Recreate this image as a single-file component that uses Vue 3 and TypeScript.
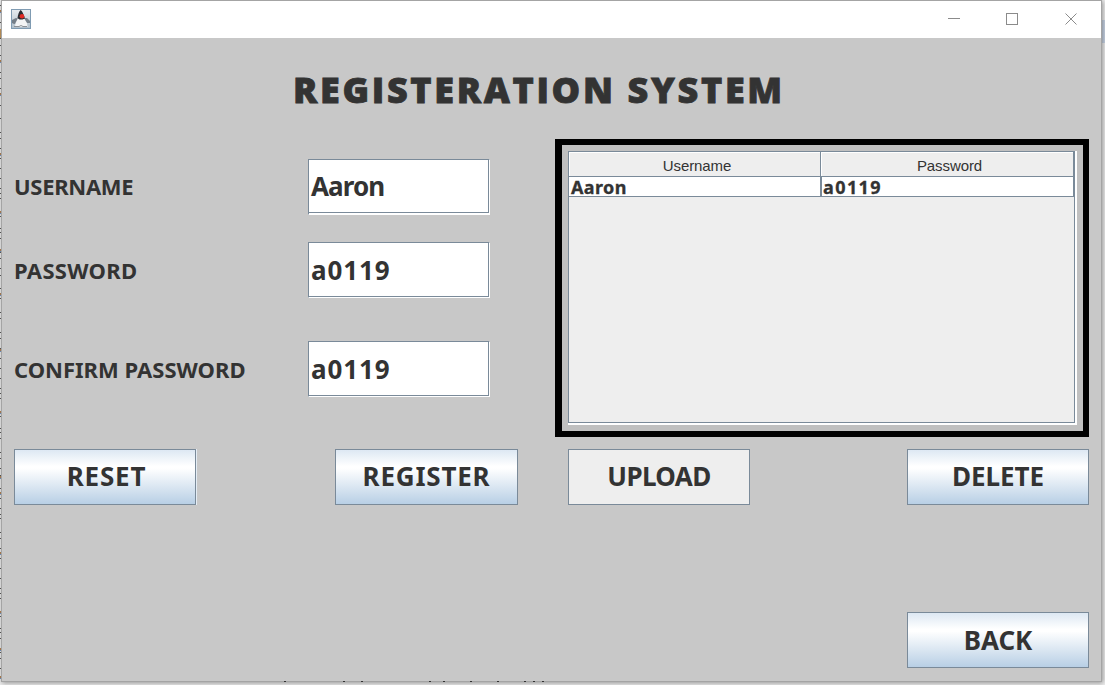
<script setup lang="ts">
interface Field { label: string; value: string; kind: string }

const fields: Field[] = [
  { label: 'USERNAME', value: 'Aaron', kind: 'user' },
  { label: 'PASSWORD', value: 'a0119', kind: 'pass' },
  { label: 'CONFIRM PASSWORD', value: 'a0119', kind: 'confirm' },
]
const columns: string[] = ['Username', 'Password']
const rows: string[][] = [['Aaron', 'a0119']]

// Edges of the editor's line numbers that show beside the window
const ticks: number[] = [
  5, 12, 22, 38, 45, 55, 72, 78, 88, 95, 105, 118, 132, 138, 148, 158, 168, 178, 188, 193, 198, 216, 228, 232, 238,
  252, 258, 268, 275, 288, 293, 298, 312, 318, 332, 338, 348, 358, 368, 378, 388, 393, 398, 416, 428, 432, 438, 452,
  458, 468, 475, 488, 493, 498, 508, 514, 518, 532, 538, 548, 558, 568, 578, 588, 593, 598, 616, 628, 632, 638, 652,
  658, 668,
]
const marks: number[] = [10, 60, 93, 153, 211, 249, 293, 349, 411, 476, 492, 552, 611, 648, 676]
const strokes: number[] = [284, 343, 361, 429, 443, 470, 497, 524, 533, 542]
</script>

<template>
  <div class="desktop">
    <svg class="behind" width="1105" height="685" viewBox="0 0 1105 685" shape-rendering="crispEdges">
      <rect x="1102" y="20" width="3" height="23" fill="#c9d5e6" />
      <rect x="0" y="29" width="1" height="9" fill="#c79a5e" />
      <rect v-for="y in ticks" :key="'t' + y" x="0" :y="y" width="2" height="1" fill="#5d5d5d" />
      <rect v-for="y in marks" :key="'m' + y" x="0" :y="y" width="1" height="2" fill="#b68555" />
      <rect v-for="y in marks" :key="'b' + y" x="0" :y="y + 2" width="2" height="1" fill="#7295c5" />
    </svg>
    <main class="window">
      <header class="titlebar">
        <svg class="app-icon" width="20" height="20" viewBox="0 0 20 20">
          <defs>
            <linearGradient id="tile" x1="0" y1="0" x2="0" y2="1">
              <stop offset="0" stop-color="#e6ebef" />
              <stop offset=".55" stop-color="#c9d3da" />
              <stop offset="1" stop-color="#aebdca" />
            </linearGradient>
          </defs>
          <rect x=".5" y=".5" width="19" height="19" fill="url(#tile)" stroke="#7f9bb2" />
          <path d="M1 11l4-2 3 1v4l-5 1-2-1z" fill="#747e88" />
          <path d="M13 9l3 0 3 3v2l-4 0z" fill="#77828c" />
          <path d="M6.500 10h7l2.500 4 .5 4-3.500-.5-3 .5-3-.5-3 .5 .5-4z" fill="#f3f4f5" />
          <path d="M9.500 1c1.800 1 3 4 4.500 8.500l-2.500 1h-3L6.500 9C7 6 7.500 3 9.500 1z" fill="#2b2c31" />
          <path d="M3 17.500h5l2-1 2 1h4" fill="none" stroke="#8b9095" />
          <circle cx="11" cy="7.200" r="2.300" fill="#e12a24" />
        </svg>
        <svg class="controls" width="130" height="14" viewBox="0 0 130 14" fill="none" stroke="#8b8b8b">
          <path d="M0 5.500h12M58.500.500h11v11h-11z" shape-rendering="crispEdges" />
          <path d="M117.500.500l11 11m0-11l-11 11" />
        </svg>
      </header>

      <h1>REGISTERATION SYSTEM</h1>

      <section class="middle">
        <div class="form">
          <label v-for="f in fields" :key="f.kind" class="row">
            <span class="label" :class="f.kind">{{ f.label }}</span>
            <span class="field" :class="f.kind"><span class="value">{{ f.value }}</span></span>
          </label>
        </div>
        <div class="panel">
          <div class="scroll">
            <div class="view">
              <div class="thead">
                <div v-for="c in columns" :key="c" class="th">{{ c }}</div>
              </div>
              <div v-for="(r, i) in rows" :key="i" class="tr">
                <div v-for="(cell, j) in r" :key="j" class="td">{{ cell }}</div>
              </div>
            </div>
          </div>
        </div>
      </section>

      <nav class="buttons">
        <button class="reset">RESET</button>
        <button class="register">REGISTER</button>
        <button class="upload">UPLOAD</button>
        <button class="delete">DELETE</button>
      </nav>
      <footer><button class="back">BACK</button></footer>
    </main>
    <svg class="under" width="1105" height="1" viewBox="0 0 1105 1" shape-rendering="crispEdges">
      <rect v-for="x in strokes" :key="x" :x="x" y="0" width="2" height="1" fill="#333" />
    </svg>
  </div>
</template>

<style>
body { margin: 0; overflow: hidden; }
</style>

<style scoped>
* { box-sizing: border-box; }
.desktop {
  position: relative; width: 1105px; height: 685px; overflow: hidden;
  background: #eee; font-family: "Noto Sans", sans-serif; color: #333;
}
.behind { position: absolute; left: 0; top: 0; }
.under { position: absolute; left: 0; top: 681px; }
.window {
  position: relative; width: 1101px; height: 682px; margin-left: 1px;
  border: 1px solid #a4a4a4; background: #c8c8c8; box-shadow: 1px 1px 5px #0006;
}
.titlebar {
  height: 37px; background: #fff; display: flex; justify-content: space-between;
  padding: 8px 23px 0 9px;
}
.controls { margin-top: 4px; }
h1 {
  margin: 0; height: 101px; padding-left: 291px; white-space: nowrap;
  font: 800 36px/103px "Open Sans", sans-serif; letter-spacing: 2.65px;
  -webkit-text-stroke: .8px #333;
}
.middle { display: flex; justify-content: space-between; height: 298px; padding: 0 12px; }
.form { display: flex; flex-direction: column; padding-top: 20px; }
.row { display: flex; height: 56px; margin-bottom: 27px; }
.row:nth-child(2) { height: 57px; margin-bottom: 42px; }
.row:nth-child(3) { height: 57px; }
.label { width: 294px; font-size: 22px; line-height: 56px; font-weight: 700; white-space: nowrap; }
.label.user { letter-spacing: -.3px; line-height: 54px; }
.label.pass { letter-spacing: .3px; }
.field {
  width: 182px; background: #fff; border: 1px solid #7a8a99;
  border-right-color: #fff; border-bottom-color: #fff; padding-bottom: 1px; display: flex;
}
.field.pass, .field.confirm { height: 56px; padding-bottom: 0; }
.value {
  flex: 1; border-right: 1px solid #7a8a99; border-bottom: 1px solid #7a8a99;
  font-size: 26px; font-weight: 700; line-height: 55px; padding-left: 2px; letter-spacing: .9px;
}
.user .value { letter-spacing: -.9px; line-height: 53px; }
.panel { width: 534px; height: 298px; border: 6px solid #000; border-left-width: 7px; background: #c0c0c0; padding: 6px; }
.scroll { width: 509px; height: 274px; background: #fff; padding: 0 2px 2px 0; }
.view { height: 272px; border: 1px solid #7a8a99; background: #eee; }
.thead { display: flex; height: 25px; }
.th {
  width: 252px; font: 15px/28px "Liberation Sans", Arial, sans-serif; text-align: center;
  letter-spacing: -.1px; padding-left: 5px;
  border-right: 1px solid #7a8a99; border-bottom: 1px solid #7a8a99;
  box-shadow: inset 1px 1px #fff;
}
.th + .th { width: 253px; }
.tr { display: flex; height: 20px; }
.td {
  width: 252px; height: 20px; background: #fff; font-size: 18px; font-weight: 700; letter-spacing: .4px;
  line-height: 20px; padding-left: 2px; border-right: 1px solid #7a8a99; border-bottom: 1px solid #7a8a99;
  -webkit-text-stroke: .3px #333;
}
.td + .td { width: 253px; padding-left: 1px; border-left: 1px solid #7a8a99; letter-spacing: 1.4px; }
.buttons { display: flex; padding: 12px 12px 0; height: 175px; align-items: flex-start; }
button {
  width: 182px; height: 56px; padding: 0 0 2px; border: 1px solid #7a8a99; color: #333;
  background: linear-gradient(#dde8f3 0%, #fff 30%, #fff 34%, #b8cfe5 100%);
  font: 700 26px/52px "Noto Sans", sans-serif; white-space: nowrap;
}
.reset { letter-spacing: .8px; padding-left: 3px; box-shadow: 1px 0 #e4edf5; }
.register { width: 183px; margin-left: 139px; letter-spacing: .8px; }
.upload { margin-left: 50px; background: #eee; letter-spacing: -.6px; }
.delete { margin-left: auto; }
.back { padding-bottom: 0; }
footer { display: flex; justify-content: flex-end; padding-right: 12px; }
</style>
